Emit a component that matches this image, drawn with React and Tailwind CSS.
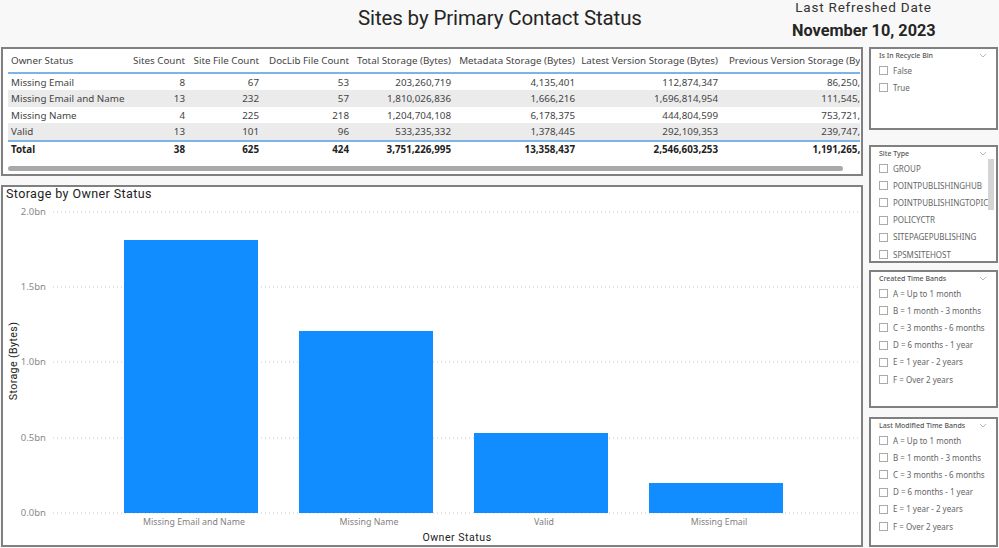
import React from 'react'

const columns = [
  { name: 'Sites Count', w: 'w-[72px]' },
  { name: 'Site File Count', w: 'w-[74px]' },
  { name: 'DocLib File Count', w: 'w-[90px]' },
  { name: 'Total Storage (Bytes)', w: 'w-[102px]' },
  { name: 'Metadata Storage (Bytes)', w: 'w-[124px]' },
  { name: 'Latest Version Storage (Bytes)', w: 'w-[143px]' },
  { name: 'Previous Version Storage (Bytes)', w: 'w-[159px]' },
]

const rows = [
  ['Missing Email', '8', '67', '53', '203,260,719', '4,135,401', '112,874,347', '86,250,901'],
  ['Missing Email and Name', '13', '232', '57', '1,810,026,836', '1,666,216', '1,696,814,954', '111,545,666'],
  ['Missing Name', '4', '225', '218', '1,204,704,108', '6,178,375', '444,804,599', '753,721,134'],
  ['Valid', '13', '101', '96', '533,235,332', '1,378,445', '292,109,353', '239,747,534'],
]
const total = ['Total', '38', '625', '424', '3,751,226,995', '13,358,437', '2,546,603,253', '1,191,265,305']

const bands = ['A = Up to 1 month', 'B = 1 month - 3 months', 'C = 3 months - 6 months', 'D = 6 months - 1 year', 'E = 1 year - 2 years', 'F = Over 2 years']

function Cells({ cells }) {
  return (
    <>
      <div className="w-[105px] shrink-0 pl-[3px] whitespace-nowrap">{cells[0]}</div>
      {cells.slice(1).map((c, i) => (
        <div key={i} className={`${columns[i].w} shrink-0 text-right whitespace-nowrap`}>{c}</div>
      ))}
    </>
  )
}

function OwnerTable() {
  return (
    <div className="h-[129px] shrink-0 border-2 border-[#808080] bg-white pl-[5px] pr-[1px] pt-[3px] flex flex-col overflow-hidden">
      <div className="w-[852px] shrink-0 overflow-hidden text-[9.8px] leading-none text-[#444]">
        <div className="flex w-[1100px] h-[22px] pb-[3px] items-center border-b-2 border-[#7db4e8]">
          <Cells cells={['Owner Status', ...columns.map(c => c.name)]} />
        </div>
        {rows.map((r, i) => (
          <div key={i} className={`flex w-[1100px] h-[16.4px] pt-[1px] items-center ${i % 2 ? 'bg-[#ebebeb]' : 'bg-white'}`}>
            <Cells cells={r} />
          </div>
        ))}
        <div className="flex w-[1100px] h-[18px] items-center border-t-2 border-[#7db4e8] font-bold text-[#222]">
          <Cells cells={total} />
        </div>
      </div>
      <div className="mt-[8px] w-[835px] h-[5px] shrink-0 rounded-full bg-[#a9a9a9]"></div>
    </div>
  )
}

function StorageChart() {
  const ticks = [['2.0bn', 212], ['1.5bn', 287], ['1.0bn', 362], ['0.5bn', 438], ['0.0bn', 513]]
  const bars = [
    { x: 124, y: 240, label: 'Missing Email and Name' },
    { x: 299, y: 331, label: 'Missing Name' },
    { x: 474, y: 433, label: 'Valid' },
    { x: 649, y: 483, label: 'Missing Email' },
  ]
  return (
    <div className="flex-1 border-2 border-[#808080] bg-white overflow-hidden">
      <svg width="858" height="356" viewBox="3 187 858 356" className="block">
        <text x="6" y="198" fontSize="12.5" letterSpacing="0.4" fill="#222" fontFamily="Roboto, sans-serif">Storage by Owner Status</text>
        {ticks.map(([t, y]) => (
          <g key={t}>
            <line x1="53" x2="858" y1={y} y2={y} stroke="#c8c8c8" strokeWidth="1" strokeDasharray="1 3" />
            <text x="46" y={y + 3} fontSize="9.5" textAnchor="end" fill="#8a8a8a" fontFamily="'Noto Sans', sans-serif">{t}</text>
          </g>
        ))}
        {bars.map(b => (
          <g key={b.label}>
            <rect x={b.x} y={b.y} width="134" height={513 - b.y} fill="#118dff" />
            <text x={b.x + 70} y="525" fontSize="8.8" textAnchor="middle" fill="#7f7f7f" fontFamily="'Noto Sans', sans-serif">{b.label}</text>
          </g>
        ))}
        <text x="457" y="541" fontSize="10.6" letterSpacing="0.5" textAnchor="middle" fill="#222" fontFamily="Roboto, sans-serif">Owner Status</text>
        <text transform="translate(16.5 361) rotate(-90)" fontSize="10.6" letterSpacing="0.4" textAnchor="middle" fill="#222" fontFamily="Roboto, sans-serif">Storage (Bytes)</text>
      </svg>
    </div>
  )
}

function Slicer({ title, items, h, mt, scroll }) {
  return (
    <div className={`${h} ${mt} shrink-0 border-2 border-[#808080] bg-white pl-[8px] pr-[3px] overflow-hidden relative`}>
      <div className="flex items-center justify-between h-[13px] pr-[6px] text-[7px] leading-none font-medium text-[#555]">
        <span>{title}</span>
        <svg width="8" height="5" viewBox="0 0 8 5" fill="none" stroke="#999" strokeWidth="0.7"><path d="M1 1l3 3 3-3" /></svg>
      </div>
      <div className="flex flex-col">
        {items.map(it => (
          <div key={it} className="flex items-center h-[17.2px] shrink-0 text-[8px] leading-none text-[#666] whitespace-nowrap">
            <span className="w-[9px] h-[9px] border border-[#aaa] bg-white mr-[5px] shrink-0"></span>
            {it}
          </div>
        ))}
      </div>
      {scroll && <div className="absolute right-[2px] top-[12px] w-[6px] h-[51px] bg-[#d4d4d4]"></div>}
    </div>
  )
}

export default function App() {
  return (
    <div className="w-[999px] h-[548px] bg-[#f8f8f8] overflow-hidden font-['Noto_Sans',sans-serif]">
      <div className="flex h-[47px]">
        <div className="w-[792px] pl-[358px] pt-[3px] text-[20.5px] tracking-[-0.13px] leading-[30px] text-[#252525] font-['Roboto',sans-serif] whitespace-nowrap">
          Sites by Primary Contact Status
        </div>
        <div className="w-[143px] text-center font-['Roboto',sans-serif]">
          <div className="text-[13.5px] leading-[15px] tracking-[0.8px] text-[#333] whitespace-nowrap">Last Refreshed Date</div>
          <div className="mt-[7px] text-[16.3px] leading-[18px] font-bold text-[#252525] whitespace-nowrap">November 10, 2023</div>
        </div>
      </div>
      <div className="flex pl-[1px]">
        <div className="w-[862px] h-[500px] flex flex-col gap-[9px]">
          <OwnerTable />
          <StorageChart />
        </div>
        <div className="w-[129px] ml-[6px] flex flex-col">
          <Slicer title="Is In Recycle Bin" items={['False', 'True']} h="h-[83px]" mt="" />
          <Slicer title="Site Type" items={['GROUP', 'POINTPUBLISHINGHUB', 'POINTPUBLISHINGTOPIC', 'POLICYCTR', 'SITEPAGEPUBLISHING', 'SPSMSITEHOST']} h="h-[118px]" mt="mt-[15px]" scroll />
          <Slicer title="Created Time Bands" items={bands} h="h-[138px]" mt="mt-[7px]" />
          <Slicer title="Last Modified Time Bands" items={bands} h="h-[130px]" mt="mt-[9px]" />
        </div>
      </div>
    </div>
  )
}
